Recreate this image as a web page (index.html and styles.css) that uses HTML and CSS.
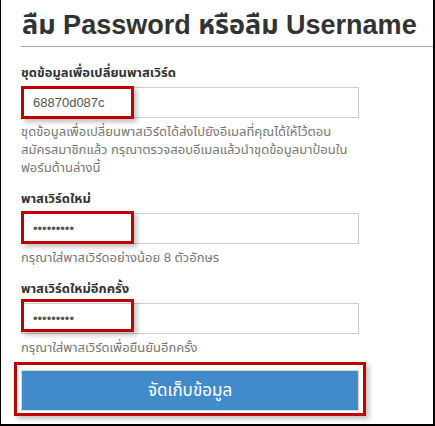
FILE: index.html
```html
<!DOCTYPE html>
<html lang="th">
<head>
    <meta charset="UTF-8">
    <meta name="viewport" content="width=device-width, initial-scale=1.0">
    <title>ลืม Password หรือลืม Username</title>
    <link rel="stylesheet" href="styles.css">
</head>
<body>
    <div class="frame">
        <h1 class="page-title">ลืม Password หรือลืม Username</h1>

        <form class="reset-form" onsubmit="return false">
            <div class="form-group">
                <label for="resetCode">ชุดข้อมูลเพื่อเปลี่ยนพาสเวิร์ด</label>
                <input type="text" id="resetCode" value="68870d087c">
                <p class="help">ชุดข้อมูลเพื่อเปลี่ยนพาสเวิร์ดได้ส่งไปยังอีเมลที่คุณได้ให้ไว้ตอนสมัครสมาชิกแล้ว กรุณาตรวจสอบอีเมลแล้วนำชุดข้อมูลมาป้อนในฟอร์มด้านล่างนี้</p>
            </div>

            <div class="form-group">
                <label for="newPassword">พาสเวิร์ดใหม่</label>
                <input type="password" id="newPassword" value="123456789">
                <p class="help">กรุณาใส่พาสเวิร์ดอย่างน้อย 8 ตัวอักษร</p>
            </div>

            <div class="form-group">
                <label for="confirmPassword">พาสเวิร์ดใหม่อีกครั้ง</label>
                <input type="password" id="confirmPassword" value="123456789">
                <p class="help">กรุณาใส่พาสเวิร์ดเพื่อยืนยันอีกครั้ง</p>
            </div>

            <button type="submit" class="btn-save">จัดเก็บข้อมูล</button>
        </form>

        <!-- กรอบแดงที่ใช้ไฮไลต์ในภาพ -->
        <div class="mark mark-code"></div>
        <div class="mark mark-pass"></div>
        <div class="mark mark-confirm"></div>
        <div class="mark mark-button"></div>
    </div>
</body>
</html>
```

FILE: styles.css
```css
html, body {
    margin: 0;
    padding: 0;
    background: #fff;
}
body {
    font-family: "Liberation Sans", Arial, "Noto Sans Thai", "Noto Sans", sans-serif;
    color: #333;
}
.frame {
    position: relative;
    box-sizing: border-box;
    width: 435px;
    height: 426px;
    border-left: 1px solid #000;
    border-right: 2px solid #000;
    border-bottom: 2px solid #000;
    overflow: hidden;
}
.page-title {
    margin: 0 0 0 20px;
    padding: 10px 0 6px 1px;
    font-size: 27px;
    line-height: 30px;
    font-weight: bold;
    color: #333;
    border-bottom: 1px solid #a8a8a8;
    white-space: nowrap;
}
.reset-form {
    padding: 17px 0 0 20px;
    width: 338px;
}
.form-group {
    margin-bottom: 13px;
}
.form-group label {
    display: block;
    font-size: 13px;
    line-height: 18px;
    font-weight: bold;
    color: #333;
    margin-bottom: 5px;
}
.form-group input {
    display: block;
    box-sizing: border-box;
    width: 338px;
    height: 31px;
    margin: 0;
    padding: 0 11px;
    border: 1px solid #ccc;
    font-family: inherit;
    font-size: 13px;
    color: #555;
    background: #fff;
    outline: none;
}
.help {
    margin: 5px 0 0;
    font-size: 13px;
    line-height: 18px;
    color: #777;
}
.btn-save {
    display: block;
    box-sizing: border-box;
    width: 338px;
    height: 41px;
    margin: 0;
    border: 1px solid #d8d8d8;
    background: #428bca;
    color: #fff;
    font-family: inherit;
    font-size: 17px;
    cursor: pointer;
}
.mark {
    position: absolute;
    box-sizing: border-box;
    border: 3px solid #c00000;
    box-shadow: 3px 3px 5px rgba(0,0,0,0.25);
}
.mark-code {
    left: 20px;
    top: 86px;
    width: 113px;
    height: 33px;
}
.mark-pass {
    left: 20px;
    top: 211px;
    width: 113px;
    height: 33px;
}
.mark-confirm {
    left: 20px;
    top: 299px;
    width: 113px;
    height: 33px;
}
.mark-button {
    left: 13px;
    top: 362px;
    width: 352px;
    height: 54px;
}
```
